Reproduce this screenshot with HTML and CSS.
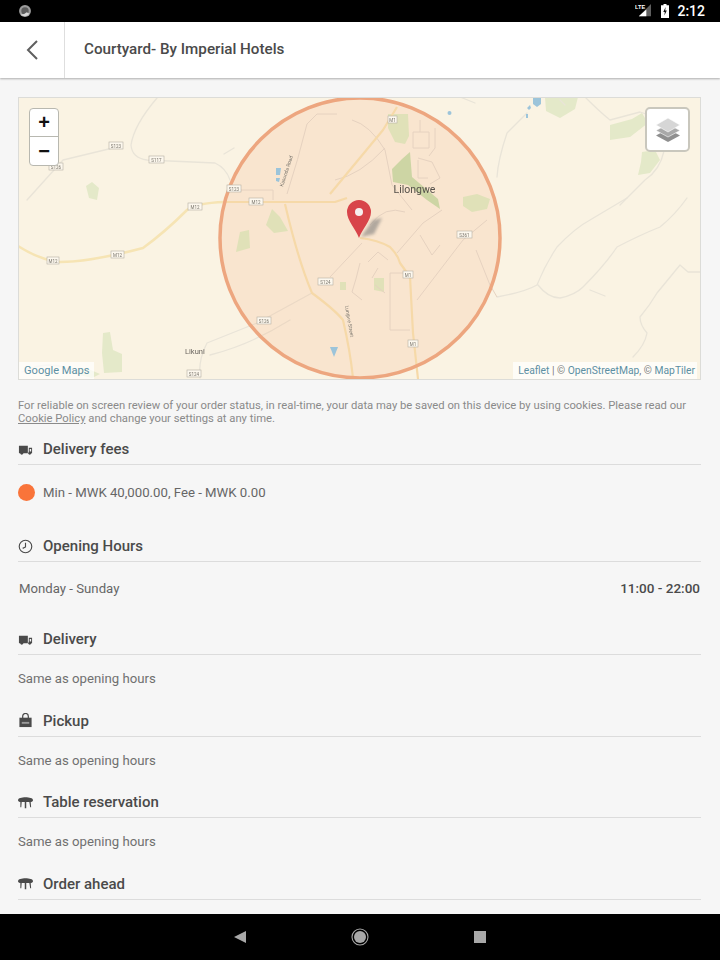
FILE: index.html
```html
<!DOCTYPE html>
<html lang="en">
<head>
<meta charset="utf-8">
<title>Courtyard- By Imperial Hotels</title>
<link rel="stylesheet" href="styles.css">
</head>
<body>
<div class="screen">
  <div class="statusbar">
    <svg class="notif" viewBox="0 0 16 16"><circle cx="8" cy="8" r="6.800" fill="#9b9b9b"/><circle cx="8" cy="8" r="4.200" fill="#5c5c5c"/><path d="M3 12a6.500 6.500 0 0 0 10-1l-3-1.500-3 2z" fill="#d8d8d8"/></svg>
    <div class="status-right">
      <svg class="signal" viewBox="0 0 18 16"><path d="M17 1v13H4z" fill="#5f5f5f"/><path d="M12 7v7H4z" fill="#fff"/><text x="0" y="6.500" class="lte">LTE</text></svg>
      <svg class="battery" viewBox="0 0 8 14"><path d="M2.500 0h3v1.200H8V14H0V1.200h2.500z" fill="#fff"/><path d="M4.600 3 2.300 8h1.500l-.4 3.400L5.800 6.400H4.200z" fill="#111"/></svg>
      <span class="clock">2:12</span>
    </div>
  </div>

  <header class="topbar">
    <div class="backcell">
      <svg class="back" viewBox="0 0 14 22"><path d="M12 2 3 11l9 9" fill="none" stroke="#5f5f5f" stroke-width="2"/></svg>
    </div>
    <h1 class="title">Courtyard- By Imperial Hotels</h1>
  </header>

  <main class="content">
    <div class="map">
      <svg class="tiles" viewBox="18 97 683 283" preserveAspectRatio="none">
        <rect x="18" y="97" width="683" height="283" fill="#faf3e3"/>
        <g fill="#e4e9c9">
          <path d="M545 97h33l-3 12-15 9-14-7z"/>
          <path d="M610 125l22-6 10-6 6 10-18 14-20 3z"/>
          <path d="M642 152l13-2 5 10-10 13-12 2 3-13z"/>
          <path d="M86 186l6-4 7 6-2 12-8-2z"/>
          <path d="M103 333l7-1 3 18 9 4 0 18-18 1-2-20z"/>
          <path d="M66 372l20-4 14 6-8 4z"/>
        </g>
        <g fill="none" stroke="#e9e4d8" stroke-width="1.300" stroke-linejoin="round" stroke-linecap="round">
          <path d="M157 98Q134 125 131 145Q132 158 147 160L215 163Q226 168 230 180"/>
          <path d="M117 147 63 160 27 200"/>
          <path d="M200 378Q198 360 207 343L257 323L312 293"/>
          <path d="M210 355Q250 345 290 320"/>
          <path d="M497 297Q525 292 537 285Q545 265 557 247Q575 228 590 220L627 198"/>
          <path d="M538 285Q548 298 560 298Q575 295 583 287Q605 265 617 247Q640 235 660 227Q675 215 687 198"/>
          <path d="M633 357Q645 345 647 333Q640 325 640 317Q650 305 657 293L680 265L688 272H700"/>
          <path d="M497 177Q498 160 507 133L527 113"/>
          <path d="M585 97Q600 112 610 120L640 112L652 116"/>
          <path d="M664 151Q660 170 645 180L620 205"/>
          <path d="M22 372Q50 358 75 372"/>
          <path d="M234 148l-10 6M460 97l15 6M560 100l5 5M590 290l15 6"/>
        </g>
        <path d="M18 246Q40 260 60 262Q90 262 143 248Q165 232 187 210Q195 203 225 202" fill="none" stroke="#f6e4b4" stroke-width="2.500"/>
        <g>
          <circle cx="360" cy="238" r="141" fill="#fa9a60" fill-opacity=".15"/>
          <g fill="#e0e1b8">
            <path d="M388 114h20l1 22-4 8-10-2-7-14z"/>
            <path d="M463 197l14-3 13 5-3 10-15 3-9-6z"/>
            <path d="M272 209l8 8 8 14-14 2-8-8z"/>
            <path d="M240 232l9-2 1 18-14 4z"/>
            <path d="M374 278l10 0 0 14-10-2z"/>
            <path d="M340 282l6 0 0 8-6 0z"/>
          </g>
          <path d="M410 152l-8 7-10 10 1 13 15 3 19 15 13 9-2-10-26-22z" fill="#cdd5a4"/>
          <g fill="none" stroke="#e6d2c0" stroke-width="1" stroke-linejoin="round">
            <path d="M413 132h16v16h-16zM420 132v-12M435 128v20l-6 8M418 158l14 4 8 16-10 6M418 160v18h10"/>
            <path d="M307 124Q298 160 287 194M307 124l10-10h20M237 190h36v10"/>
            <path d="M352 120Q370 125 385 150L392 185Q400 195 412 210M335 180Q360 175 385 148"/>
            <path d="M362 243L330 277M397 253L423 223L442 210M417 300L463 240L487 220"/>
            <path d="M390 273V330H410M390 273H405M360 263Q356 280 352 292L362 300"/>
            <path d="M370 225Q385 205 405 212M420 235L432 255L440 245M476 250L490 285L497 297"/>
            <path d="M368 262l10-10 10 8M375 285l10 8M378 268l-6 10"/>
          </g>
          <g fill="none" stroke="#f6d9a8" stroke-width="2.200" stroke-linejoin="round">
            <path d="M225 202H335L347 198"/>
            <path d="M285 204Q298 260 312 293Q335 310 343 320Q350 350 353 378"/>
            <path d="M330 194L383 130L397 107"/>
            <path d="M360 238Q378 240 390 247Q398 255 400 263L410 277L413 333L418 379"/>
          </g>
        </g>
        <g fill="#9cc4da">
          <path d="M533 97h8v7l-4 3-4-3z"/>
          <circle cx="449.500" cy="113" r="2"/>
          <path d="M330 347h8l-4 10z"/>
          <path d="M276 168h5l-1 7-4 0zM276 178h4l-1 4-3-1z"/>
          <path d="M527 108l3-3 1 3-2 2zM526 114h2v4h-2z"/>
        </g>
        <circle cx="360" cy="238" r="140" fill="none" stroke="#eda67f" stroke-width="3.500"/>
        <g class="shields">
          <rect x="109" y="142" width="14" height="7"/><text x="116" y="148">S123</text>
          <rect x="149" y="156" width="15" height="7"/><text x="156.500" y="162">S117</text>
          <rect x="49" y="163" width="14" height="7"/><text x="56" y="169">S126</text>
          <rect x="227" y="185" width="14" height="7"/><text x="234" y="191">S123</text>
          <rect x="188" y="203" width="14" height="7"/><text x="195" y="209">M12</text>
          <rect x="249" y="198" width="14" height="7"/><text x="256" y="204">M12</text>
          <rect x="47" y="257" width="12" height="7"/><text x="53" y="263">M12</text>
          <rect x="111" y="251" width="13" height="7"/><text x="117.500" y="257">M12</text>
          <rect x="318" y="278" width="15" height="7"/><text x="325.500" y="284">S124</text>
          <rect x="257" y="317" width="14" height="7"/><text x="264" y="323">S126</text>
          <rect x="187" y="370" width="14" height="7"/><text x="194" y="376">S124</text>
          <rect x="457" y="231" width="15" height="7"/><text x="464.500" y="237">S361</text>
          <rect x="403" y="271" width="10" height="7"/><text x="408" y="277">M1</text>
          <rect x="408" y="340" width="10" height="7"/><text x="413" y="346">M1</text>
          <rect x="388" y="116" width="9" height="7"/><text x="392.500" y="122">M1</text>
        </g>
        <text x="393.500" y="193" class="city">Lilongwe</text>
        <text x="185" y="354" class="town">Likuni</text>
        <text class="roadname" transform="translate(283 187) rotate(-72)">Kasunda Road</text>
        <text class="roadname" transform="translate(345 306) rotate(80)">Lungwe Street</text>
        <path d="M361 237l12-17 9-2-8 16z" class="pinshadow"/>
        <path d="M359 238c-3-9-12-17-12-26a12 12 0 0 1 24 0c0 9-9 17-12 26z" fill="#d8444a"/>
        <circle cx="359" cy="212" r="4" fill="#f6eeee"/>
      </svg>
      <div class="zoomctl">
        <span class="zoombtn zoombtn-top">+</span>
        <span class="zoombtn">−</span>
      </div>
      <div class="layers">
        <svg viewBox="0 0 26 26"><path d="M13 12 25 18.500 13 25 1 18.500z" fill="#8f8f8f"/><path d="M13 7 25 13.500 13 20 1 13.500z" fill="#a9a9a9" stroke="#fff" stroke-width=".6"/><path d="M13 1 25 8 13 15 1 8z" fill="#d6d6d6" stroke="#fff" stroke-width=".6"/></svg>
      </div>
      <div class="attrib attrib-left"><span class="maplink">Google Maps</span></div>
      <div class="attrib attrib-right"><span class="maplink">Leaflet</span> | © <span class="maplink">OpenStreetMap</span>, © <span class="maplink">MapTiler</span></div>
    </div>

    <p class="note">For reliable on screen review of your order status, in real-time, your data may be saved on this device by using cookies. Please read our <span class="underlined">Cookie Policy</span> and change your settings at any time.</p>

    <section class="block block-fees">
      <h2 class="head">
        <svg class="icon" viewBox="0 0 16 16"><path d="M1 4h9.500v8H1z" fill="#4a4a4a"/><path d="M11.500 6H15v6h-3.500zM12.500 7.500v2.500h1.500V7.500z" fill="#4a4a4a" fill-rule="evenodd"/><circle cx="4" cy="12" r="1.500" fill="#4a4a4a"/><circle cx="12.500" cy="12" r="1.500" fill="#4a4a4a"/></svg>
        Delivery fees
      </h2>
      <div class="row"><span class="dot"></span>Min - MWK 40,000.00, Fee - MWK 0.00</div>
    </section>

    <section class="block block-hours">
      <h2 class="head">
        <svg class="icon" viewBox="0 0 16 16"><circle cx="8" cy="8" r="6.700" fill="none" stroke="#4a4a4a" stroke-width="1.200"/><path d="M8 4v4.500l-3 1.500" fill="none" stroke="#4a4a4a" stroke-width="1.200"/></svg>
        Opening Hours
      </h2>
      <div class="row row-hours"><span class="day">Monday - Sunday</span><strong class="time">11:00 - 22:00</strong></div>
    </section>

    <section class="block block-service">
      <h2 class="head">
        <svg class="icon" viewBox="0 0 16 16"><path d="M1 4h9.500v8H1z" fill="#4a4a4a"/><path d="M11.500 6H15v6h-3.500zM12.500 7.500v2.500h1.500V7.500z" fill="#4a4a4a" fill-rule="evenodd"/><circle cx="4" cy="12" r="1.500" fill="#4a4a4a"/><circle cx="12.500" cy="12" r="1.500" fill="#4a4a4a"/></svg>
        Delivery
      </h2>
      <div class="row row-plain">Same as opening hours</div>
    </section>

    <section class="block block-service">
      <h2 class="head">
        <svg class="icon" viewBox="0 0 16 16"><path d="M1.500 5h13V15h-13z" fill="#4a4a4a"/><path d="M5 6V3.500a3 3 0 0 1 6 0V6" fill="none" stroke="#4a4a4a" stroke-width="1.300"/><path d="M4 9.500h8v2H4z" fill="#9a9a9a"/></svg>
        Pickup
      </h2>
      <div class="row row-plain">Same as opening hours</div>
    </section>

    <section class="block block-service">
      <h2 class="head">
        <svg class="icon" viewBox="0 0 16 16"><path d="M0 5.500c0-2 4-3 8-3s8 1 8 3-3 2-8 2-8 0-8-2z" fill="#4a4a4a"/><path d="M2.500 7h1.500l-.5 6h-1zM7.200 7h1.600v7H7.200zM12 7h1.500l.5 6h-1z" fill="#4a4a4a"/></svg>
        Table reservation
      </h2>
      <div class="row row-plain">Same as opening hours</div>
    </section>

    <section class="block block-service">
      <h2 class="head">
        <svg class="icon" viewBox="0 0 16 16"><path d="M0 5.500c0-2 4-3 8-3s8 1 8 3-3 2-8 2-8 0-8-2z" fill="#4a4a4a"/><path d="M2.500 7h1.500l-.5 6h-1zM7.200 7h1.600v7H7.200zM12 7h1.500l.5 6h-1z" fill="#4a4a4a"/></svg>
        Order ahead
      </h2>
    </section>
  </main>

  <nav class="navbar">
    <svg class="navicon" viewBox="0 0 14 14"><path d="M13 1v12L1 7z" fill="#a8a8a8"/></svg>
    <svg class="navicon navicon-home" viewBox="0 0 18 18"><circle cx="9" cy="9" r="8" fill="none" stroke="#a8a8a8" stroke-width="1.100"/><circle cx="9" cy="9" r="6" fill="#a8a8a8"/></svg>
    <svg class="navicon" viewBox="0 0 14 14"><rect x="1" y="1" width="12" height="12" fill="#a8a8a8"/></svg>
  </nav>
</div>
</body>
</html>
```

FILE: styles.css
```css
* { box-sizing: border-box; }
html, body { margin: 0; padding: 0; }
body { font-family: Roboto, "Liberation Sans", sans-serif; background: #f6f6f6; color: #4a4a4a; }

.screen { width: 720px; height: 960px; display: flex; flex-direction: column; overflow: hidden; }

.statusbar { height: 22px; flex: none; background: #000; display: flex; align-items: center; justify-content: space-between; padding: 0 15px 1px 18px; }
.notif { width: 14px; height: 14px; }
.status-right { display: flex; align-items: center; }
.signal { width: 17px; height: 15px; margin-right: 9px; }
.lte { font: 700 6px "Liberation Sans", sans-serif; fill: #fff; }
.battery { width: 8px; height: 14px; margin-right: 8px; }
.clock { color: #fff; font-size: 14px; font-weight: 500; line-height: 16px; }

.topbar { height: 56px; flex: none; background: #fff; display: flex; align-items: stretch; box-shadow: 0 1px 2px rgba(0,0,0,.3); position: relative; }
.backcell { width: 65px; flex: none; border-right: 1px solid #dedede; display: flex; align-items: center; padding-left: 25px; }
.back { width: 14px; height: 22px; }
.title { margin: 0 0 2px 19px; align-self: center; font-size: 15.200px; line-height: 20px; font-weight: 500; color: #4a4a4a; }

.content { flex: 1; min-height: 0; overflow: hidden; padding: 19px 19px 0 18px; background: #f6f6f6; }

.map { height: 283px; border: 1px solid #dcdcd8; position: relative; overflow: hidden; }
.tiles { position: absolute; left: -1px; top: -1px; width: 683px; height: 283px; display: block; filter: blur(.4px); }
.pinshadow { fill: #777; fill-opacity: .55; filter: blur(1.500px); }
.shields rect { fill: #fdf8ee; stroke: #b5b0a4; stroke-width: .6; }
.shields text { font: 4.500px Roboto, sans-serif; fill: #77736b; text-anchor: middle; }
.city { font: 10.500px Roboto, sans-serif; fill: #55504a; }
.town { font: 7.500px Roboto, sans-serif; fill: #6b6660; }
.roadname { font: 5px Roboto, sans-serif; fill: #77736b; }

.zoomctl { position: absolute; left: 10px; top: 10px; width: 30px; background: #fff; border: 1px solid #b8b8b0; border-radius: 4px; display: flex; flex-direction: column; }
.zoombtn { height: 28px; display: flex; align-items: center; justify-content: center; font: 700 20px "Liberation Sans", sans-serif; color: #111; }
.zoombtn-top { border-bottom: 1px solid #b8b8b0; }
.layers { position: absolute; left: 626px; top: 9px; width: 45px; height: 45px; background: #fff; border: 2px solid #c9c7bd; border-radius: 5px; display: flex; align-items: center; justify-content: center; }
.layers svg { width: 26px; height: 26px; }

.attrib { position: absolute; bottom: 0; height: 17px; background: rgba(255,255,255,.72); font-size: 10.300px; line-height: 17px; color: #7a7a7a; white-space: nowrap; }
.attrib-left { left: 0; padding: 0 5px; font-size: 11.100px; }
.attrib-right { right: 3px; padding: 0 2px 0 5px; }
.maplink { color: #5c8fa3; }

.note { margin: 19px 0 0; font-size: 11.250px; line-height: 13px; color: #8a8a8a; width: 680px; }
.underlined { text-decoration: underline; }

.head { margin: 0; height: 26px; padding-bottom: 5px; border-bottom: 1px solid #dcdcdc; display: flex; align-items: center; font-size: 15px; line-height: 20px; font-weight: 500; color: #4a4a4a; }
.icon { width: 15px; height: 15px; margin-right: 10px; flex: none; }

.block-fees { margin-top: 14px; }
.block-hours { margin-top: 34px; }
.block-service { margin-top: 22px; }
.block-hours + .block-service { margin-top: 31px; }

.row { margin-top: 17px; height: 20px; display: flex; align-items: center; font-size: 13.200px; color: #666; }
.row-plain { margin-top: 13.500px; color: #707070; }
.row-hours { margin-top: 16px; justify-content: space-between; padding: 0 1px; }
.time { font-size: 13.500px; font-weight: 500; color: #4a4a4a; }
.dot { width: 17px; height: 17px; border-radius: 50%; background: #f9743a; margin-right: 8px; flex: none; }

.navbar { height: 46px; flex: none; background: #000; display: flex; align-items: center; justify-content: center; gap: 104px; padding-right: 1px; }
.navicon { width: 14px; height: 14px; }
.navicon-home { width: 18px; height: 18px; }
```
